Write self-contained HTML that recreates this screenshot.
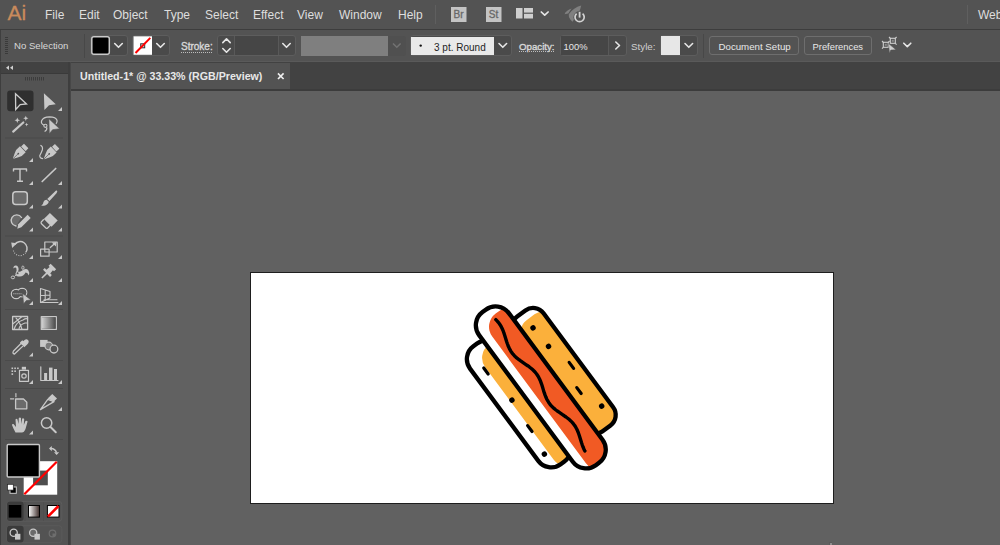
<!DOCTYPE html>
<html><head><meta charset="utf-8">
<style>
*{margin:0;padding:0;box-sizing:border-box}
html,body{width:1000px;height:545px;overflow:hidden;background:#616161;font-family:"Liberation Sans",sans-serif}
.a{position:absolute}
.mi{position:absolute;top:7.5px;font-size:12px;color:#dedede;line-height:14px;white-space:nowrap}
.lbl{position:absolute;font-size:10px;color:#d8d8d8;line-height:12px;white-space:nowrap}
.grp{position:absolute;top:35px;height:21px;border:1px solid #5d5d5d;border-radius:3px;background:#4a4a4a}
.btn{position:absolute;top:36px;height:19px;border:1px solid #6e6e6e;border-radius:3px;background:#535353}
#artboard{left:250px;top:272px;width:584px;height:232px;background:#fff;border:1px solid #1e1e1e}
</style></head><body>
<!-- menu bar -->
<div class="a" style="left:0;top:0;width:1000px;height:29px;background:#535353"></div>
<div class="a" style="left:0;top:29px;width:1000px;height:1px;background:#3d3d3d"></div>
<div class="a" style="left:7.5px;top:1px;font-size:21px;color:#c98a5c;line-height:24px;-webkit-text-stroke:0.3px #c98a5c">Ai</div>
<div class="mi" style="left:45px">File</div>
<div class="mi" style="left:79px">Edit</div>
<div class="mi" style="left:113px">Object</div>
<div class="mi" style="left:164px">Type</div>
<div class="mi" style="left:205px">Select</div>
<div class="mi" style="left:253px">Effect</div>
<div class="mi" style="left:297px">View</div>
<div class="mi" style="left:339px">Window</div>
<div class="mi" style="left:398px">Help</div>
<div class="a" style="left:435px;top:5px;width:1px;height:19px;background:#5f5f5f"></div>
<div class="a" style="left:967px;top:5px;width:1px;height:19px;background:#5f5f5f"></div>
<div class="mi" style="left:978px">Web</div>

<!-- control bar -->
<div class="a" style="left:0;top:30px;width:1000px;height:32px;background:#535353;border-left:1px solid #3f3f3f;border-bottom:1px solid #5a5a5a"></div>
<div class="lbl" style="left:14px;top:39.5px;font-size:9.6px">No Selection</div>
<div class="a" style="left:84px;top:34px;width:1px;height:24px;background:#484848"></div>
<div class="grp" style="left:90px;width:38px"></div>
<div class="grp" style="left:132px;width:38px"></div>
<div class="lbl" style="left:181px;top:41px;font-size:10px;-webkit-text-stroke:0.35px #d8d8d8">Stroke:</div>
<div class="a" style="left:181px;top:52px;width:32px;height:1px;background:repeating-linear-gradient(90deg,#bdbdbd 0 1px,transparent 1px 2px)"></div>
<div class="grp" style="left:217px;width:79px"></div>
<div class="a" style="left:234px;top:36px;width:1px;height:19px;background:#595959"></div>
<div class="a" style="left:278px;top:36px;width:1px;height:19px;background:#595959"></div>
<div class="a" style="left:235px;top:36px;width:43px;height:19px;background:#464646"></div>
<div class="a" style="left:301px;top:36px;width:87px;height:20px;background:#7f7f7f"></div>
<div class="a" style="left:388px;top:36px;width:18px;height:20px;background:#505050;border-radius:0 3px 3px 0"></div>
<div class="grp" style="left:410px;width:102px"></div>
<div class="a" style="left:411px;top:37px;width:83px;height:18px;background:#e9e9e9"></div>
<div class="a" style="left:434px;top:41.5px;font-size:10px;color:#1e1e1e;line-height:12px;white-space:nowrap">3 pt. Round</div>
<div class="lbl" style="left:519px;top:40.5px;font-size:9.7px;-webkit-text-stroke:0.35px #d8d8d8">Opacity:</div>
<div class="a" style="left:519px;top:51px;width:36px;height:1px;background:repeating-linear-gradient(90deg,#bdbdbd 0 1px,transparent 1px 2px)"></div>
<div class="grp" style="left:560px;width:67px"></div>
<div class="a" style="left:561px;top:36px;width:48px;height:19px;background:#464646;border-right:1px solid #595959"></div>
<div class="lbl" style="left:563.5px;top:41px;font-size:9.4px;color:#e6e6e6">100%</div>
<div class="lbl" style="left:631px;top:41px;font-size:9.8px;color:#cfcfcf">Style:</div>
<div class="grp" style="left:660px;width:38px"></div>
<div class="a" style="left:661px;top:36px;width:19px;height:19px;background:#e7e7e7"></div>
<div class="a" style="left:703px;top:34px;width:1px;height:24px;background:#484848"></div>
<div class="btn" style="left:709px;width:90px"></div>
<div class="lbl" style="left:718.5px;top:41px;font-size:9.7px;color:#e8e8e8">Document Setup</div>
<div class="btn" style="left:804px;width:68px"></div>
<div class="lbl" style="left:812.5px;top:41px;font-size:9.4px;color:#e8e8e8">Preferences</div>

<!-- tab bar -->
<div class="a" style="left:68px;top:62px;width:932px;height:29px;background:#424242"></div>
<div class="a" style="left:71px;top:63px;width:219px;height:26px;background:#535353"></div>
<div class="a" style="left:71px;top:89px;width:929px;height:2px;background:#3c3c3c"></div>
<div class="a" style="left:80px;top:69.3px;font-size:11.5px;font-weight:bold;color:#e8e8e8;line-height:14px;white-space:nowrap;transform:scaleX(0.925);transform-origin:0 0">Untitled-1* @ 33.33% (RGB/Preview)</div>

<!-- tools panel -->
<div class="a" style="left:0;top:62px;width:68px;height:483px;background:#535353"></div>
<div class="a" style="left:0;top:62px;width:68px;height:12px;background:#424242;border-bottom:1px solid #3a3a3a"></div>
<div class="a" style="left:0;top:62px;width:1px;height:483px;background:#3e3e3e"></div>
<div class="a" style="left:68px;top:62px;width:3px;height:483px;background:#3e3e3e;border-right:1px solid #474747"></div>

<div id="artboard" class="a"></div>

<!-- tools panel icons -->
<svg class="a" style="left:0;top:0" width="72" height="545" viewBox="0 0 72 545">
 <!-- header << -->
 <g fill="#d0d0d0">
  <path d="M6,67.8 L9,65.6 L9,70 Z"/><path d="M10,67.8 L13,65.6 L13,70 Z"/>
 </g>
 <!-- grip -->
 <g fill="#3c3c3c">
  <rect x="25" y="77" width="1" height="3.5"/><rect x="27" y="77" width="1" height="3.5"/><rect x="29" y="77" width="1" height="3.5"/><rect x="31" y="77" width="1" height="3.5"/><rect x="33" y="77" width="1" height="3.5"/><rect x="35" y="77" width="1" height="3.5"/><rect x="37" y="77" width="1" height="3.5"/><rect x="39" y="77" width="1" height="3.5"/><rect x="41" y="77" width="1" height="3.5"/><rect x="43" y="77" width="1" height="3.5"/>
 </g>
 <!-- separators -->
 <g fill="#4a4a4a">
  <rect x="5" y="137.5" width="58" height="1"/>
  <rect x="5" y="235.5" width="58" height="1"/>
  <rect x="5" y="309" width="58" height="1"/>
  <rect x="5" y="360" width="58" height="1"/>
  <rect x="5" y="388" width="58" height="1"/>
  <rect x="5" y="439" width="58" height="1"/>
 </g>
 <!-- selected tool bg -->
 <rect x="7.2" y="90.6" width="26.3" height="20.6" rx="3" fill="#2f2f2f"/>
 <!-- selection arrow outline -->
 <path d="M15.5,93.8 L26.5,103.9 L20.2,104.6 L15.7,109.5 Z" fill="none" stroke="#cdcdcd" stroke-width="1.3" stroke-linejoin="miter"/>
 <!-- direct selection -->
 <path d="M43.9,93.3 L55.8,104.3 L49,105.3 L44.4,110 Z" fill="#c8c8c8"/>
 <!-- small triangles -->
 <g fill="#c8c8c8">
  <path d="M58,111 L62,107 L62,111 Z"/>
  <path d="M29,162 L33,158 L33,162 Z"/>
  <path d="M29,185 L33,181 L33,185 Z"/><path d="M58,185 L62,181 L62,185 Z"/>
  <path d="M29,208.5 L33,204.5 L33,208.5 Z"/><path d="M58,208.5 L62,204.5 L62,208.5 Z"/>
  <path d="M29,231.5 L33,227.5 L33,231.5 Z"/><path d="M58,231.5 L62,227.5 L62,231.5 Z"/>
  <path d="M29,259 L33,255 L33,259 Z"/><path d="M58,259 L62,255 L62,259 Z"/>
  <path d="M29,282 L33,278 L33,282 Z"/><path d="M58,282 L62,278 L62,282 Z"/>
  <path d="M29,305 L33,301 L33,305 Z"/><path d="M58,305 L62,301 L62,305 Z"/>
  <path d="M29,356.5 L33,352.5 L33,356.5 Z"/>
  <path d="M29,384 L33,380 L33,384 Z"/><path d="M58,384 L62,380 L62,384 Z"/>
  <path d="M58,411 L62,407 L62,411 Z"/>
  <path d="M29,434.5 L33,430.5 L33,434.5 Z"/>
 </g>
 <g fill="none" stroke="#c8c8c8" stroke-width="1.4" stroke-linecap="round" stroke-linejoin="round">
  <!-- magic wand -->
  <line x1="13.2" y1="131.6" x2="23.3" y2="122.5" stroke-width="2.2"/>
  <!-- type T -->
  <path d="M13.5,171.5 L13.5,169 L26.5,169 L26.5,171.5 M20,169 L20,181.3 M17,181.3 L23,181.3" stroke-linecap="butt"/>
  <!-- line -->
  <line x1="42.2" y1="181.5" x2="55.7" y2="168.5" stroke-width="1.7"/>
  <!-- rect -->
  <rect x="12.8" y="191.8" width="14.5" height="12.6" rx="3" fill="#6b6b6b" stroke-width="1.5"/>
  <!-- shaper circle -->
  <path d="M16,226 A5.6,5.6 0 1 1 21.5,217.5" fill="#6b6b6b"/>
  <!-- scale -->
  <rect x="44.8" y="242" width="12.4" height="10" stroke-width="1.2"/>
  <rect x="40.6" y="249.2" width="8.5" height="7" stroke-width="1.2"/>
  <line x1="50.3" y1="247.6" x2="54.5" y2="243.8" stroke-width="1.3"/>
  <!-- rotate -->
  <path d="M14.6,244.6 A6.8,6.8 0 1 1 25.9,252.2" stroke-width="1.5" stroke-linecap="butt"/>
  <path d="M25.6,252.7 A6.8,6.8 0 0 1 13.4,250.5" stroke-width="1.1" stroke-dasharray="0.9 1.5" stroke-linecap="butt"/>
  <!-- shape builder circles -->

  <!-- perspective grid -->
  <path d="M40.5,288.5 L40.5,302.5 L58,302.5 M40.5,288.5 L50,291.5 L50,298 L40.5,302.5 M40.5,295.5 L50,295 M45.2,290 L45.2,300.5 M44,299.8 L57,299.8" stroke-width="1.1"/>
  <!-- mesh -->
  <rect x="12.6" y="316.5" width="15" height="13" stroke-width="1.3"/>
  <path d="M12.6,324 Q18,320 22,316.5 M14,329.5 Q16,322 23,320 Q26,318 27.6,319 M19,329.5 Q19,325 25,323 L27.6,323 M16,318 Q20,322 22,329.5" stroke-width="1.1"/>
  <!-- gradient border -->
  <rect x="41.3" y="316.6" width="15" height="12.8" stroke-width="1.3"/>
  <!-- eyedropper tube -->
  <path d="M21.5,343 L13.5,351 Q12,353.5 14.5,354 L22.6,346.4" stroke-width="1.3"/>
  <!-- symbol sprayer bottle -->
  <rect x="19.5" y="370.3" width="9" height="11" stroke-width="1.2"/>
  <circle cx="24" cy="376" r="2.2" stroke-width="1.2"/>
  <!-- graph -->
  <path d="M40.8,366.8 L40.8,380.5 L58,380.5" stroke-width="1.2"/>
  <!-- artboard -->
  <path d="M10.5,398.8 L14.5,398.8 M15.9,393.5 L15.9,397" stroke-width="1.2" stroke-dasharray="1.2 0.8"/>
  <path d="M15.6,399 L23.5,399 L26.8,402.3 L26.8,408.8 L15.6,408.8 Z" fill="#6b6b6b" stroke-width="1.3"/>
  <!-- knife -->
  <path d="M40.4,409.6 L47.8,399.3 L54,401.6 Z" stroke-width="1.3"/>
  <!-- zoom -->
  <circle cx="46.6" cy="423" r="5.2" stroke-width="1.5"/>
  <line x1="50.5" y1="427" x2="55.8" y2="432.2" stroke-width="2"/>
 </g>
 <g fill="#c8c8c8">
  <!-- wand stars -->
  <path d="M17.3,117.4 L18.084,119.416 L20.1,120.2 L18.084,120.98400000000001 L17.3,123.0 L16.516000000000002,120.98400000000001 L14.5,120.2 L16.516000000000002,119.416 Z"/>
  <path d="M25.8,115.7 L26.528000000000002,117.572 L28.400000000000002,118.3 L26.528000000000002,119.02799999999999 L25.8,120.89999999999999 L25.072,119.02799999999999 L23.2,118.3 L25.072,117.572 Z"/>
  <path d="M26.6,122.8 L27.104000000000003,124.09599999999999 L28.400000000000002,124.6 L27.104000000000003,125.104 L26.6,126.39999999999999 L26.096,125.104 L24.8,124.6 L26.096,124.09599999999999 Z"/>


  <!-- brush -->
  <path d="M56.8,190.6 Q58,191.5 56.5,193.2 L49.5,201 L47.2,199 L55,191.5 Q56,190.3 56.8,190.6 Z"/>
  <path d="M46.6,199.7 L48.8,201.8 Q48,205 44,205.8 L41.2,205.8 Q43.5,204 43.6,201.8 Q44.5,199.6 46.6,199.7 Z"/>
  <!-- shaper pencil -->
  <path d="M17.3,228.8 L18.2,224.2 L27.6,214.8 L30.7,217.9 L21.3,227.3 Z"/>
  <!-- eraser -->
  <path d="M49.9,213 L57.7,220.6 L51.5,226.8 L43.8,219.1 Z"/>
  <!-- pin -->
  <path d="M11.2,242.6 L17,243.2 L12.2,248 Z"/>
  <path d="M56.5,242 L51.8,242.6 L55.9,246.6 Z"/>
  <!-- eyedropper bulb -->
  <path d="M20.8,343.6 L23.7,340.7 Q26,338 28,340 Q29.8,342 27.2,344.4 L24.3,347.2 Z"/>
  <!-- blend square and mid circle -->
  <rect x="40.1" y="339.9" width="7.5" height="7"/>
  <!-- sprayer dots -->
  <rect x="11.5" y="367.5" width="1.6" height="1.6"/><rect x="14.3" y="367.5" width="1.6" height="1.6"/><rect x="17.1" y="367.5" width="1.6" height="1.6"/>
  <rect x="11.5" y="370.4" width="1.6" height="1.6"/><rect x="14.3" y="370.4" width="1.6" height="1.6"/>
  <rect x="11.5" y="373.3" width="1.6" height="1.6"/>
  <rect x="21.8" y="366.8" width="4.2" height="2.8"/>
  <!-- graph bars -->
  <rect x="44.1" y="373" width="3" height="7.5"/><rect x="49" y="367.6" width="3.5" height="12.9"/><rect x="54" y="369" width="3" height="11.5"/>
  <!-- knife handle -->
  <path d="M47.6,398.6 L52.3,393.9 L57,398.4 L53.9,401.6 Z"/>
  <!-- hand -->
  <path d="M15.5,432.5 Q13,428 12,425 Q12,423.5 13.5,424 L16,427 L15.5,419.5 Q16.5,418 17.5,419.5 L18.5,424 L18.8,418 Q20,416.8 21,418 L21.2,424 L22.2,418.6 Q23.3,417.6 24.2,419 L23.8,425 L25.5,421 Q26.8,420.3 27.6,421.6 L25.5,429 Q24,432.5 22,432.5 Z"/>
 </g>
 <!-- lasso loop -->
 <path d="M44.2,125.2 Q40.6,123.8 41.6,120.8 Q43.2,117 49.5,116.9 Q56,117.1 57,120.3 Q57.5,122.3 56,123.8" fill="none" stroke="#c8c8c8" stroke-width="1.2"/>
 <circle cx="45.4" cy="125.8" r="1.6" fill="none" stroke="#c8c8c8" stroke-width="1.1"/>
 <path d="M46.6,127.3 Q47.6,129.8 44.6,131.6" fill="none" stroke="#c8c8c8" stroke-width="1.2"/>
 <path d="M48.9,118.8 L59.6,128.7 L52.6,129.7 L49.3,133.8 Z" fill="#c8c8c8" stroke="#535353" stroke-width="0.6" stroke-linejoin="miter"/>
 <!-- pens -->
 <defs><g id="pen">
  <rect x="-3.4" y="-9.6" width="6.8" height="4.3" rx="0.4" fill="#c8c8c8"/>
  <path d="M-4.4,-4.6 L4.4,-4.6 Q5.1,1 2.9,4.6 L0.4,9.6 L-0.4,9.6 L-2.9,4.6 Q-5.1,1 -4.4,-4.6 Z" fill="#c8c8c8"/>
  <line x1="0" y1="2" x2="0" y2="9.8" stroke="#535353" stroke-width="0.7"/>
  <circle cx="0" cy="2" r="0.9" fill="#535353"/>
 </g></defs>
 <use href="#pen" transform="translate(19.7 152.3) rotate(46) scale(0.94)"/>
 <use href="#pen" transform="translate(50.6 152.6) rotate(46) scale(0.94)"/>
 <path d="M40.4,145.3 Q43.2,146.5 42.3,150 Q41.2,153 39.8,155.5 Q39.5,158.5 43.1,158.6" fill="none" stroke="#c8c8c8" stroke-width="1.2"/>
 <!-- eraser tip -->
 <path d="M43.8,219.3 L41.2,222 Q40.8,223 41.5,223.7 L45.9,228 Q46.8,228.8 47.6,228 L50.8,224.8" fill="none" stroke="#c8c8c8" stroke-width="1.3"/>
 <!-- pin needle -->
 <g transform="translate(48.6 271.3) rotate(45)" fill="#c8c8c8">
  <path d="M-3.9,-6.8 L3.9,-6.8 L3.9,-3.8 L2.3,-3.8 L2.7,0.4 L5,0.4 L5,2.9 L0.8,2.9 L0.8,9.5 L-0.8,9.5 L-0.8,2.9 L-5,2.9 L-5,0.4 L-2.7,0.4 L-2.3,-3.8 L-3.9,-3.8 Z"/>
 </g>
 <!-- puppet warp -->
 <path d="M13.3,268.6 Q13.5,265.3 15.8,265.4 Q18.7,265.7 18.6,269.5 L18,272 Q20.5,271.8 23,270 Q26.5,268 28.4,270.5 Q29.9,272.6 28.8,275.4 Q27.6,272.4 25.6,272.6 Q23.4,276.8 19.5,276.6 Q16,276.6 15.4,274.2 L16.6,270.5 Q16.7,267.6 15.5,267.5 Q14.2,267.5 13.3,268.6 Z" fill="#c8c8c8"/>
 <ellipse cx="22.9" cy="267.7" rx="1.1" ry="1.7" fill="none" stroke="#c8c8c8" stroke-width="0.9"/>
 <circle cx="17.6" cy="273.2" r="1.4" fill="#535353" stroke="#c8c8c8" stroke-width="0.9"/>
 <ellipse cx="12.9" cy="277.4" rx="1.7" ry="1.4" fill="none" stroke="#c8c8c8" stroke-width="1"/>
 <line x1="14.5" y1="276.3" x2="16" y2="275" stroke="#c8c8c8" stroke-width="0.9"/>
 <!-- shape builder arrow -->
 <g fill="#535353" stroke="#c8c8c8" stroke-width="1.2">
  <ellipse cx="16.2" cy="294" rx="4.9" ry="4.6"/>
  <ellipse cx="22.2" cy="292.6" rx="4.6" ry="4.3"/>
 </g>
 <g fill="#535353">
  <ellipse cx="16.2" cy="294" rx="4.3" ry="4"/>
  <ellipse cx="22.2" cy="292.6" rx="4" ry="3.7"/>
 </g>
 <line x1="13.4" y1="293.8" x2="21.8" y2="293.8" stroke="#c8c8c8" stroke-width="1.1" stroke-dasharray="1 1"/>
 <path d="M22.6,293.5 L31,299.9 L26.4,300.6 L23.6,303.8 Z" fill="#c8c8c8" stroke="#535353" stroke-width="0.6"/>
 <!-- gradient fill -->
 <defs><linearGradient id="gr1" x1="0" x2="1"><stop offset="0" stop-color="#d0d0d0"/><stop offset="1" stop-color="#4a4a4a"/></linearGradient>
 <linearGradient id="gr2" x1="0" x2="1"><stop offset="0" stop-color="#ffffff"/><stop offset="1" stop-color="#3b2b28"/></linearGradient></defs>
 <rect x="42" y="317.3" width="13.6" height="11.4" fill="url(#gr1)"/>
 <!-- blend mid circle -->
 <circle cx="48.8" cy="346" r="3.8" fill="#7a7a7a" stroke="#c8c8c8" stroke-width="1.2"/>
 <circle cx="53.9" cy="349.1" r="3.9" fill="#535353" stroke="#c8c8c8" stroke-width="1.3"/>
 <path d="M19.9,342.6 L22.3,340.2 L24.6,342.5 L22.2,344.9 Z" fill="#c8c8c8"/>

 <!-- color section -->
 <!-- stroke square -->
 <rect x="23.7" y="461.2" width="33.5" height="33.5" fill="#fff"/>
 <rect x="33.1" y="470.6" width="14.7" height="14.7" fill="#4e4e4e"/>
 <line x1="24.3" y1="494.3" x2="56.8" y2="461.7" stroke="#f00" stroke-width="2.2"/>
 <!-- fill square -->
 <rect x="7.2" y="444.5" width="32.2" height="32.5" fill="#000" stroke="#c9c9c9" stroke-width="1.4" rx="1"/>
 <!-- swap -->
 <path d="M50,448.5 Q55,448 56.5,452.5" fill="none" stroke="#c8c8c8" stroke-width="1.4"/>
 <path d="M49,448.6 L51.8,446 L51.8,451.2 Z M56.6,455 L54,452.2 L59.2,452.2 Z" fill="#c8c8c8"/>
 <!-- default colors -->
 <rect x="10" y="487" width="6.3" height="6.3" fill="#000" stroke="#d0d0d0" stroke-width="1"/>
 <rect x="7.5" y="484.3" width="5.8" height="5.8" fill="#fff" stroke="#222" stroke-width="0.7"/>
 <!-- color row -->
 <rect x="6.9" y="501.4" width="54.9" height="19.8" rx="3" fill="none" stroke="#5c5c5c" stroke-width="1"/>
 <rect x="7" y="501.5" width="16.6" height="19.6" rx="3" fill="#3c3c3c"/>
 <rect x="24.5" y="502" width="1" height="19" fill="#4f4f4f"/>
 <rect x="43" y="502" width="1" height="19" fill="#4f4f4f"/>
 <rect x="8.7" y="505" width="12.6" height="12.6" fill="#000"/>
 <rect x="28.5" y="505.5" width="11" height="11.6" fill="url(#gr2)" stroke="#000" stroke-width="1"/>
 <rect x="47.4" y="505.5" width="11.6" height="11.6" fill="#fff" stroke="#000" stroke-width="1"/>
 <line x1="47.9" y1="516.6" x2="58.5" y2="506" stroke="#f00" stroke-width="2.6"/>
 <!-- draw modes -->
 <rect x="6.9" y="525.7" width="54.9" height="17" rx="3" fill="none" stroke="#5a5a5a" stroke-width="1"/>
 <rect x="7" y="525.8" width="16.6" height="16.8" rx="3" fill="#3a3a3a"/>
 <circle cx="13.7" cy="532.8" r="3.6" fill="#3a3a3a" stroke="#c8c8c8" stroke-width="1.3"/>
 <rect x="15" y="533.8" width="5.4" height="5.8" fill="#c8c8c8"/>
 <circle cx="33.2" cy="532.8" r="3.6" fill="#6a6a6a" stroke="#c8c8c8" stroke-width="1.3"/>
 <rect x="34.5" y="533.8" width="5.4" height="5.8" fill="#c8c8c8"/>
 <circle cx="52.5" cy="533.5" r="3.3" fill="none" stroke="#6e6e6e" stroke-width="1.2"/>
 <path d="M52.5,533.5 L55.8,533.5 A3.3,3.3 0 0 1 52.5,536.8 Z" fill="#6e6e6e"/>
</svg>


<!-- icons overlay -->
<svg class="a" style="left:0;top:0" width="1000" height="545" viewBox="0 0 1000 545">
 <g fill="none" stroke="#e6e6e6" stroke-width="1.6" stroke-linecap="round" stroke-linejoin="round">
  <polyline points="114.7,43.5 118.5,47.3 122.3,43.5"/>
  <polyline points="156.7,43.5 160.5,47.3 164.3,43.5"/>
  <polyline points="222.8,42.6 226.5,38.9 230.2,42.6"/>
  <polyline points="222.8,48.5 226.5,52.2 230.2,48.5"/>
  <polyline points="282.8,43.5 286.5,47.3 290.2,43.5"/>
  <polyline points="499,43.5 502.8,47.3 506.6,43.5"/>
  <polyline points="615.8,42 619.5,45.5 615.8,49"/>
  <polyline points="685,43.5 688.8,47.3 692.6,43.5"/>
  <polyline points="903.8,43.2 907.3,46.6 910.8,43.2"/>
  <polyline points="541.3,12 544.7,15.2 548.1,12" stroke-width="1.7"/>
 </g>
 <polyline points="393,43.5 396.8,47.3 400.6,43.5" fill="none" stroke="#727272" stroke-width="1.5"/>
 <!-- fill swatch -->
 <rect x="91.8" y="36.8" width="17.5" height="17.5" rx="2" fill="#000" stroke="#c9c9c9" stroke-width="1.5"/>
 <!-- stroke swatch -->
 <rect x="133.5" y="36.3" width="18.5" height="18.5" fill="#fff"/>
 <rect x="140.7" y="43.8" width="4" height="4" fill="#ddd" stroke="#333" stroke-width="1"/>
 <line x1="135.5" y1="53" x2="150.3" y2="37.9" stroke="#f00" stroke-width="2"/>
 <!-- 3pt dot -->
 <circle cx="420.7" cy="45.6" r="1.2" fill="#111"/>
 <!-- grip -->
 <g fill="#3a3a3a">
  <rect x="5" y="37" width="3" height="1"/><rect x="5" y="39" width="3" height="1"/><rect x="5" y="41" width="3" height="1"/><rect x="5" y="43" width="3" height="1"/><rect x="5" y="45" width="3" height="1"/><rect x="5" y="47" width="3" height="1"/><rect x="5" y="49" width="3" height="1"/><rect x="5" y="51" width="3" height="1"/><rect x="5" y="53" width="3" height="1"/>
 </g>
 <!-- Br St -->
 <rect x="451" y="7" width="15.5" height="15" fill="#c4c4c4"/>
 <text x="453.6" y="18.3" font-family="Liberation Sans" font-size="10" fill="#686868" stroke="#686868" stroke-width="0.3">Br</text>
 <rect x="486" y="7" width="15.5" height="15" fill="#c4c4c4"/>
 <text x="488.8" y="18.3" font-family="Liberation Sans" font-size="10" fill="#686868" stroke="#686868" stroke-width="0.3">St</text>
 <!-- workspace -->
 <g fill="#cfcfcf">
  <rect x="516" y="8" width="6.5" height="10.5"/>
  <rect x="524" y="8" width="9" height="4.6"/>
  <rect x="524" y="13.8" width="9" height="4.7"/>
 </g>
 <!-- rocket/power -->
 <path d="M581.2,5.5 Q580,12 575,18 L572.5,21.8 L570.5,19.8 Q568.2,17 568.8,14.2 Q573.5,7.5 581.2,5.5 Z" fill="#808080"/>
 <path d="M564.5,14.2 Q566.5,10.3 571.5,8.6 L568.3,13.6 Z" fill="#808080"/>
 <circle cx="579.6" cy="17.3" r="6.2" fill="#535353"/>
 <path d="M576.6,13.6 A4.6,4.6 0 1 0 582.6,13.6" fill="none" stroke="#d2d2d2" stroke-width="1.7"/>
 <line x1="579.6" y1="11.8" x2="579.6" y2="17.6" stroke="#d2d2d2" stroke-width="1.8"/>
 <!-- align icon -->
 <g fill="none" stroke="#cfcfcf" stroke-width="1.1">
  <rect x="883.3" y="42.3" width="5" height="5"/>
  <rect x="890.3" y="38.3" width="5" height="5"/>
  <path d="M882,41 L883.3,42.3 M889.6,41 L888.3,42.3 M882,48.6 L883.3,47.3 M889,37 L890.3,38.3 M896.6,37 L895.3,38.3 M896.6,44.6 L895.3,43.3"/>
 </g>
 <g fill="#8a8a8a"><rect x="884.8" y="43.8" width="2" height="2"/><rect x="891.8" y="39.8" width="2" height="2"/></g>
 <path d="M888.5,43.5 L896,49.8 L890.8,50 L889.5,53.3 Z" fill="#cfcfcf" stroke="#535353" stroke-width="0.5"/>
 <!-- tab close -->
 <g stroke="#f0f0f0" stroke-width="1.7" stroke-linecap="square">
  <line x1="278.6" y1="74" x2="283" y2="78.4"/><line x1="283" y1="74" x2="278.6" y2="78.4"/>
 </g>
</svg>

<!-- hot dog -->
<svg class="a" style="left:0;top:0" width="1000" height="545" viewBox="0 0 1000 545">
<defs>
 <rect id="rS" x="-86" y="-18.5" width="190.5" height="37" rx="16.5"/>
 <rect id="rF" x="-64" y="9.1" width="146.8" height="36.6" rx="16"/>
 <rect id="rB" x="-61.8" y="-46.4" width="143" height="36.2" rx="13"/>
 <clipPath id="cpS"><use href="#rS"/></clipPath>
 <clipPath id="cpF"><use href="#rF"/></clipPath>
 <clipPath id="cpB"><use href="#rB"/></clipPath>
</defs>
<g transform="translate(535.3 380) rotate(53.5)">
 <use href="#rB" fill="#fff"/>
 <g clip-path="url(#cpB)"><use href="#rB" fill="#fbb03b" transform="translate(8.5 -5)"/></g>
 <use href="#rB" fill="none" stroke="#000" stroke-width="4.3"/>
 <use href="#rF" fill="#fff"/>
 <g clip-path="url(#cpF)"><use href="#rF" fill="#fbb03b" transform="translate(8 -13)"/></g>
 <use href="#rF" fill="none" stroke="#000" stroke-width="4.3"/>
 <use href="#rS" fill="#fff"/>
 <g clip-path="url(#cpS)"><use href="#rS" fill="#f15a24" transform="translate(9 -9.7)"/></g>
 <use href="#rS" fill="none" stroke="#000" stroke-width="4.3"/>
 <path d="M-72.00,-4.18 L-70.00,-4.45 L-68.00,-4.59 L-66.00,-4.58 L-64.00,-4.43 L-62.00,-4.14 L-60.00,-3.73 L-58.00,-3.22 L-56.00,-2.61 L-54.00,-1.94 L-52.00,-1.23 L-50.00,-0.52 L-48.00,0.18 L-46.00,0.83 L-44.00,1.41 L-42.00,1.89 L-40.00,2.26 L-38.00,2.50 L-36.00,2.60 L-34.00,2.55 L-32.00,2.37 L-30.00,2.05 L-28.00,1.61 L-26.00,1.07 L-24.00,0.45 L-22.00,-0.23 L-20.00,-0.95 L-18.00,-1.66 L-16.00,-2.35 L-14.00,-2.98 L-12.00,-3.54 L-10.00,-3.99 L-8.00,-4.33 L-6.00,-4.54 L-4.00,-4.60 L-2.00,-4.52 L0.00,-4.30 L2.00,-3.95 L4.00,-3.49 L6.00,-2.92 L8.00,-2.28 L10.00,-1.59 L12.00,-0.87 L14.00,-0.16 L16.00,0.51 L18.00,1.13 L20.00,1.66 L22.00,2.09 L24.00,2.40 L26.00,2.56 L28.00,2.59 L30.00,2.48 L32.00,2.23 L34.00,1.85 L36.00,1.36 L38.00,0.77 L40.00,0.11 L42.00,-0.59 L44.00,-1.30 L46.00,-2.01 L48.00,-2.67 L50.00,-3.27 L52.00,-3.78 L54.00,-4.18 L56.00,-4.45 L58.00,-4.59 L60.00,-4.58 L62.00,-4.43 L64.00,-4.14 L66.00,-3.73 L68.00,-3.22 L70.00,-2.61 L72.00,-1.94 L74.00,-1.23 L76.00,-0.52 L78.00,0.18 L80.00,0.83 L82.00,1.41 L84.00,1.89 L86.00,2.26 L86.50,2.33" fill="none" stroke="#000" stroke-width="3.4" stroke-linecap="round" stroke-linejoin="round"/>
 <g fill="#000">
  <circle cx="-43.3" cy="-29.2" r="2.7"/>
  <circle cx="-19.1" cy="-30.6" r="2.7"/>
  <circle cx="60.5" cy="-37.8" r="2.7"/>
  <circle cx="2.3" cy="30.8" r="2.7"/>
  <circle cx="65" cy="36.8" r="2.7"/>
 </g>
 <g stroke="#000" stroke-width="3.2" stroke-linecap="round">
  <line x1="6" y1="-37.7" x2="13.4" y2="-37.7"/>
  <line x1="30.8" y1="-28.8" x2="38.2" y2="-28.8"/>
  <line x1="-40.3" y1="34.3" x2="-32.9" y2="34.3"/>
  <line x1="32.1" y1="33.3" x2="39.5" y2="33.3"/>
 </g>
</g>
</svg>
<div class="a" style="left:829px;top:542px;width:3px;height:3px;background:#5a5a5a"></div>
<div class="a" style="left:830px;top:543px;width:2px;height:2px;background:#8e8e8e"></div>
</body></html>
